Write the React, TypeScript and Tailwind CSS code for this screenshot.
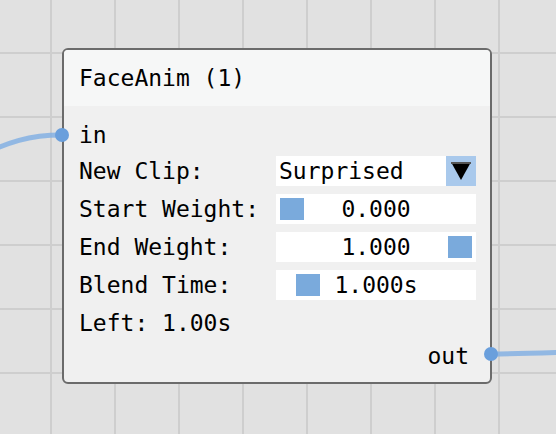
const mono = "font-['DejaVu_Sans_Mono','Liberation_Mono',monospace]";

type SliderRowProps = {
  label: string;
  value: string;
  grabClass: string;
};

function SliderRow({ label, value, grabClass }: SliderRowProps) {
  return (
    <div className="flex h-[30px] items-center">
      <span className="w-[197px] shrink-0">{label}</span>
      <div className="relative flex h-[30px] w-[200px] items-center justify-center bg-white">
        <span className={["absolute top-[4px] h-[22px] w-[24px] bg-[#7aaadc]", grabClass].join(" ")} />
        <span className="relative">{value}</span>
      </div>
    </div>
  );
}

export default function App() {
  return (
    <div className={`relative h-[434px] w-[556px] overflow-hidden bg-[#e1e1e1] text-[23px] leading-none text-black ${mono}`}>
      {/* canvas grid */}
      <svg className="absolute inset-0" width="556" height="434">
        <defs>
          <pattern id="grid" x="50" y="52" width="64" height="64" patternUnits="userSpaceOnUse">
            <rect x="0" y="0" width="2" height="64" fill="#cecece" />
            <rect x="0" y="0" width="64" height="2" fill="#cecece" />
          </pattern>
        </defs>
        <rect width="556" height="434" fill="url(#grid)" />
      </svg>

      {/* node */}
      <div className="absolute left-[62px] top-[48px] flex h-[336px] w-[430px] flex-col overflow-hidden rounded-[6px] border-2 border-[#6b6b6b] bg-[#f0f0f0]">
        <div className="flex h-[56px] items-center bg-[#f6f7f7] pl-[15px]">FaceAnim (1)</div>
        <div className="flex flex-col pl-[15px] pr-[14px] pt-[14px]">
          <div className="flex h-[30px] items-center">in</div>
          <div className="mt-[6px] flex h-[30px] items-center">
            <span className="w-[197px] shrink-0">New Clip:</span>
            <div className="flex h-[30px] w-[200px] items-center bg-white">
              <span className="flex-1 pl-[3px]">Surprised</span>
              <span className="flex h-[30px] w-[30px] items-center justify-center bg-[#a9c9ec]">
                <svg width="20" height="18" viewBox="0 0 20 18">
                  <polygon points="0,0 20,0 10,18" fill="#000" />
                  <rect x="0" y="0" width="20" height="2" fill="#555" />
                </svg>
              </span>
            </div>
          </div>
          <div className="mt-[8px] flex flex-col gap-[8px]">
            <SliderRow label="Start Weight:" value="0.000" grabClass="left-[4px]" />
            <SliderRow label="End Weight:" value="1.000" grabClass="right-[4px]" />
            <SliderRow label="Blend Time:" value="1.000s" grabClass="left-[20px]" />
          </div>
          <div className="mt-[8px] flex h-[30px] items-center">Left: 1.00s</div>
          <div className="mt-[3px] flex h-[30px] items-center justify-end pr-[7px]">out</div>
        </div>
      </div>

      {/* wires and pins */}
      <svg className="pointer-events-none absolute inset-0" width="556" height="434">
        <path d="M -30 160 C 10 141, 30 135, 62 135" stroke="#7eaee3" strokeOpacity="0.8" strokeWidth="5" fill="none" />
        <path d="M 491 354 C 520 354, 540 353, 600 351" stroke="#7eaee3" strokeOpacity="0.8" strokeWidth="5" fill="none" />
        <circle cx="62" cy="135" r="7" fill="#6a9fdc" />
        <circle cx="491" cy="354" r="7" fill="#6a9fdc" />
      </svg>
    </div>
  );
}
